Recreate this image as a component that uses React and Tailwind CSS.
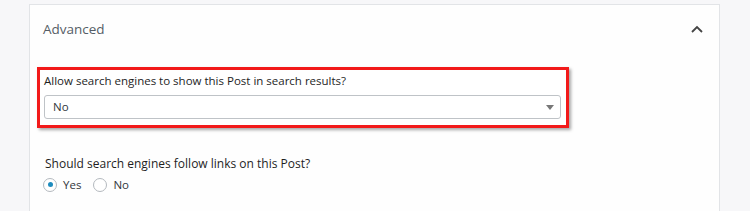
import React from "react";

export default function App() {
  return (
    <div className="w-[750px] h-[211px] bg-[#f7f7f9] overflow-hidden" style={{ fontFamily: '"Open Sans", "Noto Sans", sans-serif' }}>
      <div className="ml-[29px] w-[691px] h-full mt-[4px] bg-[#fefefe] border-l border-r border-t border-[#e2e4e7]">
        <div className="flex items-center justify-between h-[48px] pl-[13px] pr-[14px]">
          <span className="text-[13.5px] text-[#555d66] mt-[1px]">Advanced</span>
          <svg width="14" height="10" viewBox="0 0 14 10" className="mr-[1px]">
            <path d="M2 8 L7 3 L12 8" fill="none" stroke="#444" strokeWidth="1.8" />
          </svg>
        </div>
        <div className="ml-[7px] mt-[14px] w-[532px] h-[61px] border-[3px] border-[#f21a1a] shadow-[2px_2px_3px_rgba(0,0,0,0.35)] bg-white pl-[4px] pt-[3px]">
          <div className="text-[11.5px] text-[#1e1e1e] leading-[16px]">Allow search engines to show this Post in search results?</div>
          <div className="mt-[6px] w-[517px] h-[24px] border border-[#bfc3c7] rounded-[3px] flex items-center justify-between pl-[8px] pr-[6px]">
            <span className="text-[11.5px] text-[#32373c]">No</span>
            <svg width="8" height="5" viewBox="0 0 8 5"><path d="M0 0 L8 0 L4 5 Z" fill="#777" /></svg>
          </div>
        </div>
        <div className="ml-[15px] mt-[28px] text-[12px] text-[#1e1e1e] leading-[16px]">Should search engines follow links on this Post?</div>
        <div className="ml-[13px] mt-[4px] flex items-center text-[11.5px] text-[#32373c]">
          <span className="w-[14px] h-[14px] rounded-full border border-[#b4b9be] bg-white flex items-center justify-center">
            <span className="w-[5px] h-[5px] rounded-full bg-[#1e8cbe]" />
          </span>
          <span className="ml-[6px]">Yes</span>
          <span className="ml-[12px] w-[14px] h-[14px] rounded-full border border-[#b4b9be] bg-white" />
          <span className="ml-[6px]">No</span>
        </div>
      </div>
    </div>
  );
}
